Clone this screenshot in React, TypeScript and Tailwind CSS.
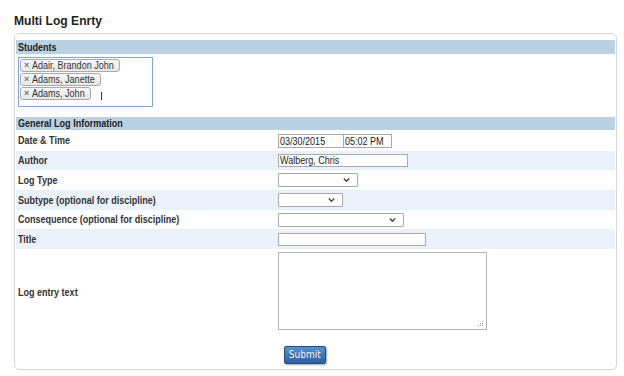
import React from 'react'

const font = { fontFamily: '"Liberation Sans", Arial, sans-serif' }

// the reference text is narrow; squeeze Arial horizontally to match
function T({ children }: { children: React.ReactNode }) {
  return <span className="inline-block whitespace-nowrap origin-left scale-x-[0.82]">{children}</span>
}

function Chevron() {
  return (
    <svg width="7" height="5" viewBox="0 0 7 5" className="absolute right-[7px] top-1/2 -translate-y-1/2">
      <path d="M0.8 1 L3.5 3.7 L6.2 1" fill="none" stroke="#444" strokeWidth="1.4" />
    </svg>
  )
}

function Select({ width }: { width: number }) {
  return (
    <div
      className="relative h-[14px] border border-[#a9a9a9] bg-white rounded-[1px]"
      style={{ width }}
    >
      <Chevron />
    </div>
  )
}

function Chip({ name, width }: { name: string; width: number }) {
  return (
    <div
      className="flex items-center h-[13px] mb-px border border-[#aaa] rounded-[3px] bg-gradient-to-b from-[#f8f8f8] to-[#e6e6e6] pl-[3px] overflow-hidden text-[11px] leading-none text-[#333]"
      style={{ width }}
    >
      <span className="text-[9px] text-[#777] mr-[3px] font-bold">×</span>
      <T>{name}</T>
    </div>
  )
}

interface RowProps {
  label: string
  shaded?: boolean
  h: number
  children?: React.ReactNode
}

function Row({ label, shaded, h, children }: RowProps) {
  return (
    <div
      className={`flex items-center ${shaded ? 'bg-[#eaf1fb]' : 'bg-white'}`}
      style={{ height: h }}
    >
      <div className="w-[262px] pl-[2px] text-[11px] font-bold text-[#333]"><T>{label}</T></div>
      <div className="flex items-center">{children}</div>
    </div>
  )
}

export default function App() {
  return (
    <div className="w-[624px] h-[376px] bg-white overflow-hidden" style={font}>
      <h1 className="pl-[14px] pt-[11px] h-[33px] text-[13px] font-bold text-[#222]">
        <span className="inline-block origin-left scale-x-[0.93]">Multi Log Enrty</span>
      </h1>

      <div className="mx-[14px] w-[603px] h-[337px] border border-[#d6d6d6] rounded-[5px] pt-[6px] px-px">
        {/* Students */}
        <div className="h-[14px] bg-[#bad1e4] pl-[2px] text-[11px] font-bold leading-[14px] text-[#222]"><T>Students</T></div>
        <div className="ml-[2px] mt-[3px] w-[135px] h-[50px] border border-[#7fa7dd] pt-px pl-[1px]">
          <div className="flex"><Chip name="Adair, Brandon John" width={100} /></div>
          <div className="flex"><Chip name="Adams, Janette" width={81} /></div>
          <div className="flex items-center">
            <Chip name="Adams, John" width={71} />
            <span className="ml-[10px] w-px h-[8px] bg-[#333] mt-[3px]" />
          </div>
        </div>

        {/* General log info */}
        <div className="mt-[10px] h-[13px] bg-[#bad1e4] pl-[2px] text-[11px] font-bold leading-[13px] text-[#222]">
          <T>General Log Information</T>
        </div>
        <Row label="Date & Time" h={21}>
          <div className="w-[66px] h-[14px] border border-[#a9a9a9] overflow-hidden text-[11px] leading-[12px] pl-px text-[#222]"><T>03/30/2015</T></div>
          <div className="w-[48px] h-[14px] border border-l-0 border-[#a9a9a9] overflow-hidden text-[11px] leading-[12px] pl-px text-[#222]"><T>05:02 PM</T></div>
        </Row>
        <Row label="Author" shaded h={19}>
          <div className="w-[130px] h-[13px] border border-[#a9a9a9] bg-white overflow-hidden text-[11px] leading-[11px] pl-px text-[#222]"><T>Walberg, Chris</T></div>
        </Row>
        <Row label="Log Type" h={20}>
          <Select width={80} />
        </Row>
        <Row label="Subtype (optional for discipline)" shaded h={20}>
          <Select width={65} />
        </Row>
        <Row label="Consequence (optional for discipline)" h={19}>
          <Select width={126} />
        </Row>
        <Row label="Title" shaded h={20}>
          <div className="w-[148px] h-[13px] border border-[#a9a9a9] bg-white" />
        </Row>
        <div className="flex h-[86px] bg-white">
          <div className="w-[262px] pl-[2px] text-[11px] font-bold text-[#333] flex items-center"><T>Log entry text</T></div>
          <div className="pt-[3px]">
            <div className="relative w-[209px] h-[78px] border border-[#b5b5b5] bg-white">
              <svg width="6" height="6" viewBox="0 0 6 6" className="absolute right-[2px] bottom-[2px]">
                <rect x="4" y="0" width="1" height="1" fill="#999" />
                <rect x="2" y="2" width="1" height="1" fill="#999" />
                <rect x="4" y="2" width="1" height="1" fill="#999" />
                <rect x="0" y="4" width="1" height="1" fill="#999" />
                <rect x="2" y="4" width="1" height="1" fill="#999" />
                <rect x="4" y="4" width="1" height="1" fill="#999" />
              </svg>
            </div>
          </div>
        </div>
        <div className="pl-[268px] pt-[6px]">
          <button
            className="w-[42px] h-[18px] rounded-[2px] border border-[#1d4f86] bg-gradient-to-b from-[#5590cf] to-[#2a62a3] text-white shadow-[1px_1px_2px_rgba(0,0,0,0.35)] [text-shadow:0_0_1px_rgba(0,0,0,0.4)]"
            style={{ fontFamily: 'Verdana, "DejaVu Sans", sans-serif', fontSize: 10 }}
          >
            <span className="inline-block scale-x-[0.9]">Submit</span>
          </button>
        </div>
      </div>
    </div>
  )
}
